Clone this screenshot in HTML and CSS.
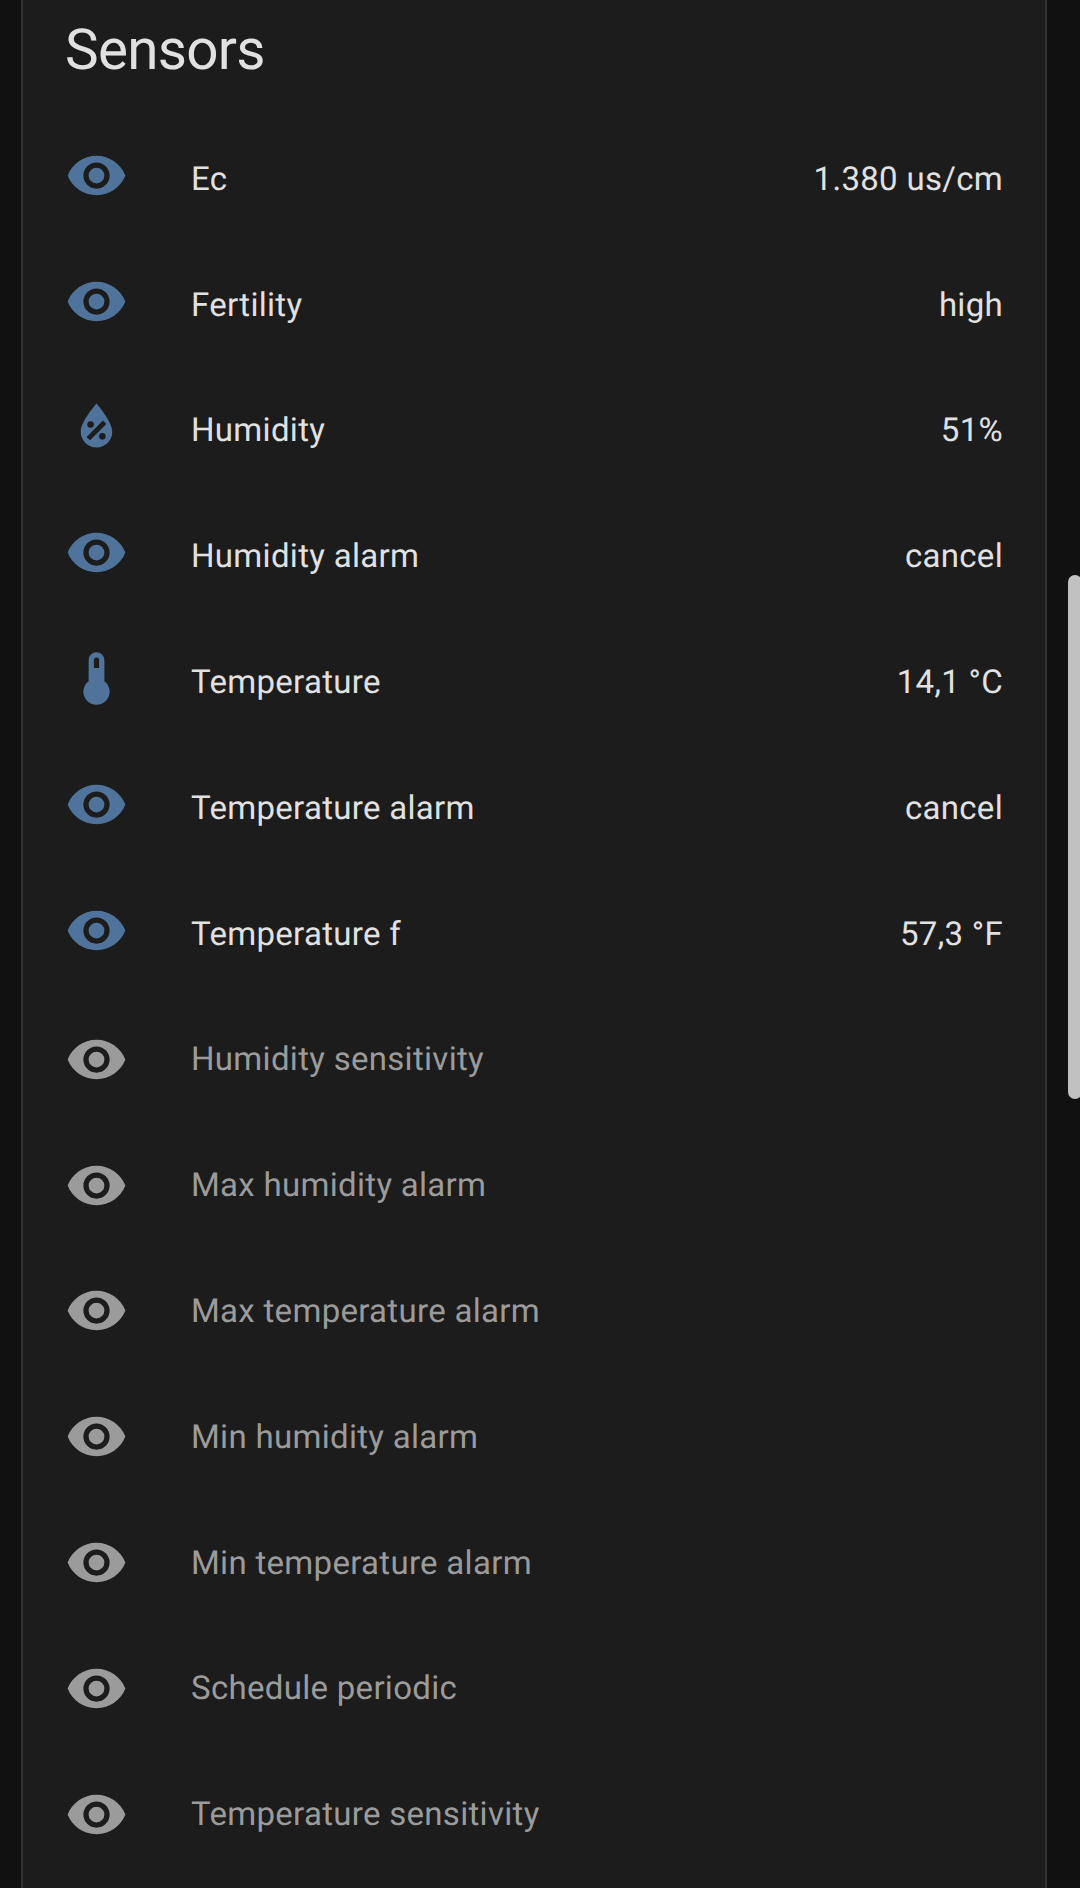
FILE: index.html
```html
<!DOCTYPE html>
<html lang="en">
<head>
<meta charset="utf-8">
<title>Sensors</title>
<link rel="stylesheet" href="styles.css">
</head>
<body>
<svg class="defs" aria-hidden="true">
<symbol id="eye" viewBox="0 0 24 24"><path d="M12 9a3 3 0 0 0-3 3 3 3 0 0 0 3 3 3 3 0 0 0 3-3 3 3 0 0 0-3-3m0 8a5 5 0 0 1-5-5 5 5 0 0 1 5-5 5 5 0 0 1 5 5 5 5 0 0 1-5 5m0-12.5C7 4.500 2.730 7.610 1 12c1.730 4.390 6 7.500 11 7.500s9.270-3.110 11-7.500c-1.730-4.390-6-7.500-11-7.500z"/></symbol>
<symbol id="water" viewBox="0 0 24 24"><path d="M12 3.250S6 10 6 14c0 3.310 2.690 6 6 6s6-2.690 6-6c0-4-6-10.750-6-10.750m2.470 6.500 1.280 1.280-6.220 6.220-1.280-1.280 6.220-6.220M9.750 10A1.250 1.250 0 0 1 11 11.250a1.250 1.250 0 0 1-1.250 1.250 1.250 1.250 0 0 1-1.250-1.250A1.250 1.250 0 0 1 9.750 10m4.500 4.500a1.250 1.250 0 0 1 1.250 1.250A1.250 1.250 0 0 1 14.250 17 1.250 1.250 0 0 1 13 15.750a1.250 1.250 0 0 1 1.250-1.250z"/></symbol>
<symbol id="thermo" viewBox="0 0 24 24"><path d="M15 13V5a3 3 0 0 0-6 0v8a5 5 0 1 0 6 0m-3-9a1 1 0 0 1 1 1v3h-2V5a1 1 0 0 1 1-1z"/></symbol>
</svg>
<main class="card">
<h1 class="title">Sensors</h1>
<ul class="list">
<li class="row"><svg class="icon"><use href="#eye"/></svg><span class="name">Ec</span><span class="value">1.380 us/cm</span></li>
<li class="row"><svg class="icon"><use href="#eye"/></svg><span class="name">Fertility</span><span class="value">high</span></li>
<li class="row"><svg class="icon"><use href="#water"/></svg><span class="name">Humidity</span><span class="value">51%</span></li>
<li class="row"><svg class="icon"><use href="#eye"/></svg><span class="name">Humidity alarm</span><span class="value">cancel</span></li>
<li class="row"><svg class="icon"><use href="#thermo"/></svg><span class="name">Temperature</span><span class="value">14,1 °C</span></li>
<li class="row"><svg class="icon"><use href="#eye"/></svg><span class="name">Temperature alarm</span><span class="value">cancel</span></li>
<li class="row"><svg class="icon"><use href="#eye"/></svg><span class="name">Temperature f</span><span class="value">57,3 °F</span></li>
<li class="row disabled"><svg class="icon"><use href="#eye"/></svg><span class="name">Humidity sensitivity</span></li>
<li class="row disabled"><svg class="icon"><use href="#eye"/></svg><span class="name">Max humidity alarm</span></li>
<li class="row disabled"><svg class="icon"><use href="#eye"/></svg><span class="name">Max temperature alarm</span></li>
<li class="row disabled"><svg class="icon"><use href="#eye"/></svg><span class="name">Min humidity alarm</span></li>
<li class="row disabled"><svg class="icon"><use href="#eye"/></svg><span class="name">Min temperature alarm</span></li>
<li class="row disabled"><svg class="icon"><use href="#eye"/></svg><span class="name">Schedule periodic</span></li>
<li class="row disabled"><svg class="icon"><use href="#eye"/></svg><span class="name">Temperature sensitivity</span></li>
</ul>
</main>
<div class="scrollbar"></div>
</body>
</html>
```
FILE: styles.css
```css
* { box-sizing: border-box; }
body { margin: 0; height: 1888px; padding: 0 33px 0 21px; overflow: hidden; background: #111; color: #e1e1e1; font-family: Roboto, sans-serif; position: relative; text-rendering: geometricPrecision; }
.defs { position: absolute; width: 0; height: 0; }
.card { height: 1888px; padding: 0 42px; background: #1c1c1c; border: solid #323232; border-width: 0 2px; overflow: hidden; }
.title { margin: 0; height: 115.400px; padding-top: 17px; font-size: 56.600px; line-height: 66px; font-weight: 400; letter-spacing: -0.700px; }
.list { margin: 0; padding: 0; list-style: none; }
.row { display: flex; align-items: center; height: 125.800px; font-size: 33px; letter-spacing: 0.300px; }
.icon { width: 63px; height: 63px; margin: -6px 63px 0 0; fill: #50739b; flex: none; }
.name, .value { padding-top: 2px; }
.name { flex: 1; }
.disabled { color: #9b9b9b; }
.disabled .icon { margin-top: 1px; fill: #9b9b9b; }
.scrollbar { position: absolute; left: 1068px; top: 575px; width: 14px; height: 524px; border-radius: 7px; background: #c1c1c1; }
```
